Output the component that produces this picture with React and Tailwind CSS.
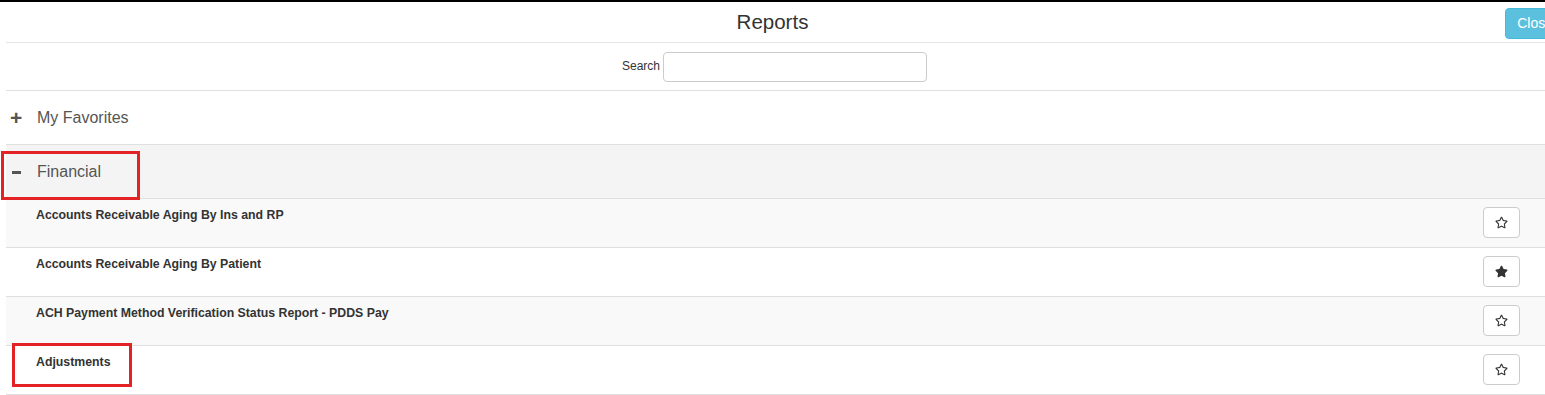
import { FaRegStar, FaStar } from "react-icons/fa";

const reports = [
  { name: "Accounts Receivable Aging By Ins and RP", favorite: false },
  { name: "Accounts Receivable Aging By Patient", favorite: true },
  { name: "ACH Payment Method Verification Status Report - PDDS Pay", favorite: false },
  { name: "Adjustments", favorite: false }
];

function StarButton({ favorite }) {
  return (
    <button
      type="button"
      className="flex h-[31px] w-[37px] items-center justify-center rounded-[4px] border border-[#ccc] bg-white text-[#333]"
    >
      {favorite ? <FaStar size={13} /> : <FaRegStar size={13} />}
    </button>
  );
}

export default function App() {
  return (
    <div
      className="relative h-[395px] w-[1545px] overflow-hidden border-t-2 border-black bg-white text-[#333]"
      style={{ fontFamily: '"Liberation Sans", Arial, sans-serif' }}
    >
      <div className="pl-[6px]">
        <div className="grid h-[41px] grid-cols-[1fr_auto_1fr] items-center border-b border-[#e5e5e5]">
          <div />
          <div className="-ml-[6px] text-[20.5px] leading-none text-[#333]">Reports</div>
          <div className="flex justify-end">
            <button
              type="button"
              className="-mr-[20px] mt-[2px] h-[31px] rounded-[4px] border border-[#46b8da] bg-[#5bc0de] px-[11px] text-[14px] text-white"
            >
              Close
            </button>
          </div>
        </div>

        <div className="flex h-[48px] items-center justify-center gap-[3px] border-b border-[#e0e0e0] pr-[2px]">
          <span className="-mt-[1px] text-[12px]">Search</span>
          <input
            type="text"
            className="h-[30px] w-[264px] rounded-[4px] border border-[#ccc] bg-white px-2 text-[12px] outline-none"
          />
        </div>

        <div className="flex h-[54px] items-center gap-[15px] border-b border-[#e0e0e0] pl-[4px] text-[16px] text-[#555]">
          <span className="w-[12px] text-center text-[21px] font-bold leading-none text-[#555]">+</span>
          <span>My Favorites</span>
        </div>

        <div className="flex h-[54px] items-center gap-[15px] border-b border-[#e0e0e0] bg-[#f4f4f4] pl-[4px] text-[16px] text-[#555]">
          <span className="flex w-[12px] justify-center">
            <span className="mt-[1px] h-[3px] w-[9px] bg-[#555]" />
          </span>
          <span>Financial</span>
        </div>

        {reports.map((report, i) => (
          <div
            key={report.name}
            className={`flex h-[49px] items-start justify-between border-b border-[#e0e0e0] pl-[30px] pr-[25px] ${
              i % 2 === 0 ? "bg-[#f9f9f9]" : "bg-white"
            }`}
          >
            <span className="pt-[8px] text-[12.3px] font-bold leading-[16px] text-[#333]">{report.name}</span>
            <div className="pt-[8px]">
              <StarButton favorite={report.favorite} />
            </div>
          </div>
        ))}
      </div>

      {/* annotation boxes drawn over the screenshot */}
      <div className="pointer-events-none absolute left-[1px] top-[149px] h-[49px] w-[139px] border-[3px] border-[#e32226]" />
      <div className="pointer-events-none absolute left-[12px] top-[341px] h-[44px] w-[120px] border-[3px] border-[#e32226]" />
    </div>
  );
}
